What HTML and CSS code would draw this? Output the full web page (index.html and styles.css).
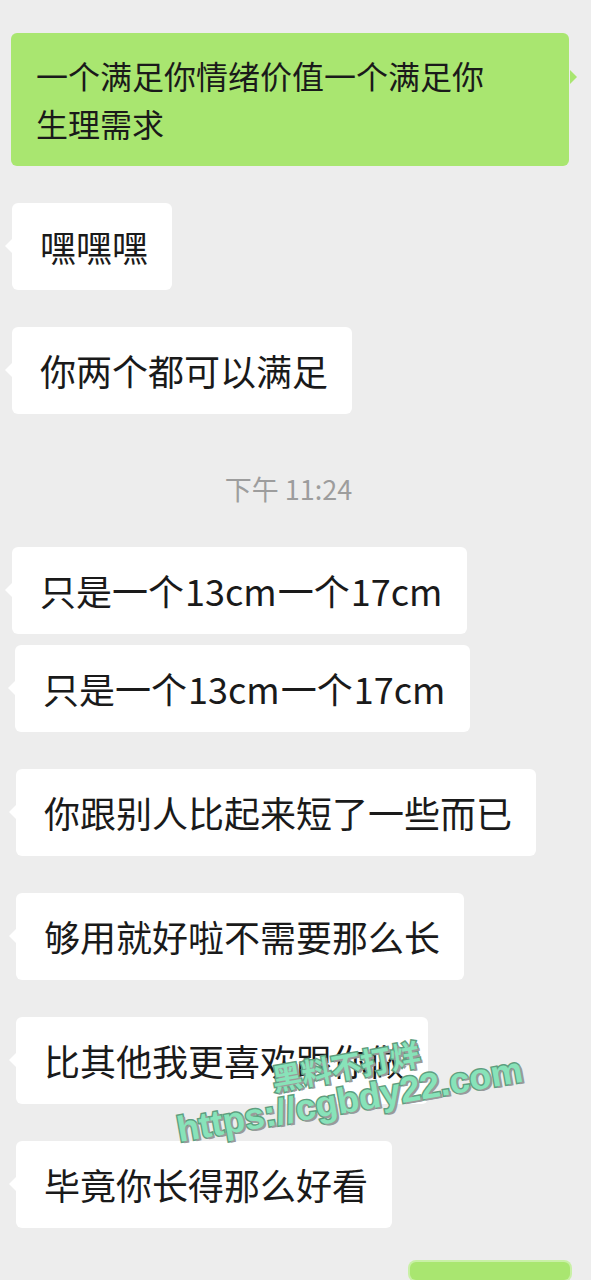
FILE: index.html
```html
<!DOCTYPE html>
<html lang="zh-CN">
<head>
    <meta charset="UTF-8">
    <link rel="stylesheet" href="styles.css">
    <title>聊天记录</title>
</head>
<body>
<div class="chat">
    <div class="bubble mine wide">一个满足你情绪价值一个满足你生理需求</div>

    <div class="bubble">嘿嘿嘿</div>
    <div class="bubble">你两个都可以满足</div>

    <div class="time">下午 11:24</div>

    <div class="bubble first">只是一个<span class="num">13cm</span>一个<span class="num">17cm</span></div>
    <div class="bubble close in">只是一个<span class="num">13cm</span>一个<span class="num">17cm</span></div>
    <div class="bubble in">你跟别人比起来短了一些而已</div>
    <div class="bubble in">够用就好啦不需要那么长</div>
    <div class="bubble in">比其他我更喜欢跟你做</div>
    <div class="bubble in">毕竟你长得那么好看</div>

    <div class="bubble mine last"></div>

    <div class="watermark">
        <div class="wm-name">黑料不打烊</div>
        <div class="wm-url">https://cgbdy22.com</div>
    </div>
</div>
</body>
</html>
```

FILE: styles.css
```css
body {
    margin: 0;
    background: #ededed;
    font-family: "Noto Sans CJK SC", "Noto Sans", sans-serif;
    color: #1a1a1a;
}

.chat {
    position: relative;
    display: flex;
    flex-direction: column;
    align-items: flex-start;
    height: 1280px;
    padding: 33px 0 0 12px;
    box-sizing: border-box;
    overflow: hidden;
}

.bubble {
    position: relative;
    margin-top: 37px;
    padding: 19px 24px 20px 28px;
    background: #fff;
    border-radius: 6px;
    font-size: 36px;
    line-height: 48px;
    white-space: nowrap;
}

/* little tail on the left side */
.bubble::before {
    content: "";
    position: absolute;
    left: -7px;
    top: 36px;
    border: 7px solid transparent;
    border-left-width: 0;
    border-right-color: #fff;
}

.bubble.in {
    margin-left: 4px;
}

.bubble.first {
    margin-top: 0;
}

.bubble.close {
    margin-top: 11px;
    margin-left: 3px;
}

.num {
    margin: 0 1px;
}

.mine {
    align-self: flex-end;
    margin-right: 22px;
    background: #a9e670;
}

.mine::before {
    left: auto;
    right: -8px;
    top: 37px;
    border-width: 7px;
    border-right-width: 0;
    border-right-color: transparent;
    border-left-color: #a9e670;
}

.wide {
    width: 558px;
    box-sizing: border-box;
    margin-top: 0;
    padding: 18px 84px 19px 25px;
    font-size: 32px;
    white-space: normal;
}

.last {
    width: 160px;
    height: 87px;
    padding: 0;
    margin-top: 34px;
    margin-right: 21px;
    box-shadow: 0 0 0 2px #c9f0a6;
}

.last::before {
    display: none;
}

.time {
    align-self: stretch;
    margin: 60px 0 43px -12px;
    padding-right: 14px;
    text-align: center;
    font-size: 27px;
    line-height: 30px;
    color: #9d9d9d;
}

.watermark {
    position: absolute;
    left: 181px;
    top: 1080px;
    transform: rotate(-10deg);
    transform-origin: 0 100%;
    color: #88e3b9;
    font-weight: bold;
    -webkit-text-stroke: 3px #5f9e80;
    paint-order: stroke fill;
    text-shadow: 2px 2px 0 #9a9a9a;
    white-space: nowrap;
}

.wm-name {
    padding-left: 102px;
    font-family: "Noto Sans CJK SC", sans-serif;
    font-size: 30px;
    line-height: 30px;
}

.wm-url {
    font-family: "Liberation Sans", Arial, sans-serif;
    font-size: 36px;
    line-height: 40px;
}
```
